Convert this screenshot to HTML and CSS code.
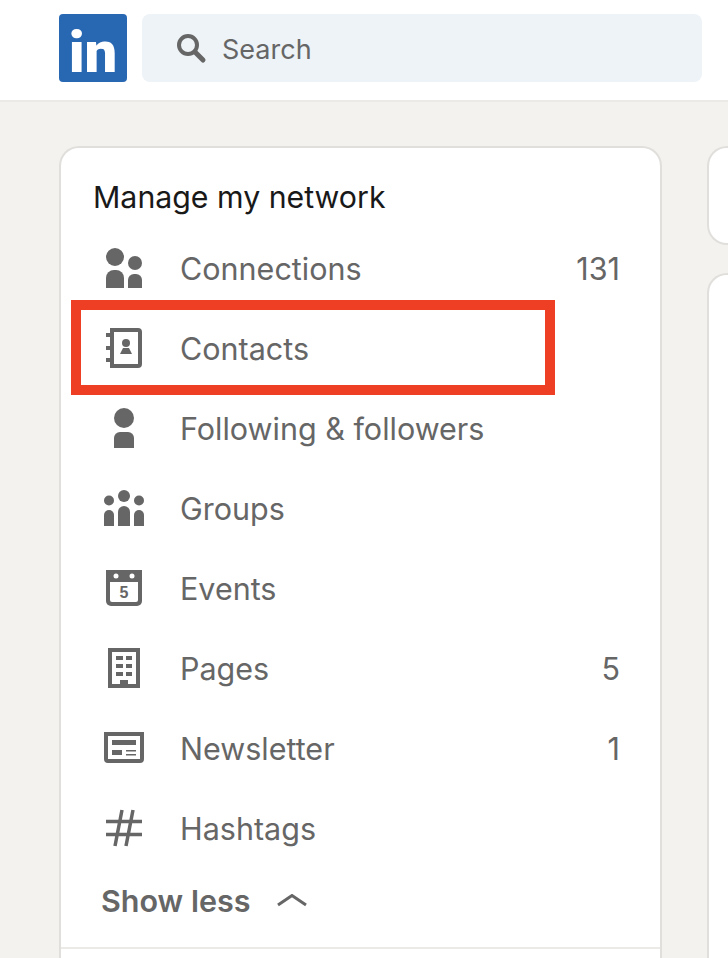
FILE: index.html
```html
<!DOCTYPE html>
<html lang="en">
<head>
  <meta charset="UTF-8">
  <title>LinkedIn - Manage my network</title>
  <link rel="stylesheet" href="styles.css">
</head>
<body>

  <header>
    <div class="logo">in</div>
    <div class="search">
      <svg class="search-icon" viewBox="0 0 32 32" width="32" height="32">
        <circle cx="13" cy="13" r="9" fill="none" stroke="#666" stroke-width="4"/>
        <path d="M20 20l8 8" stroke="#666" stroke-width="5" stroke-linecap="round"/>
      </svg>
      <span class="search-text">Search</span>
    </div>
  </header>

  <main>
    <section class="card network">
      <h1>Manage my network</h1>
      <ul>
        <li>
          <svg viewBox="0 0 48 48" width="48" height="48">
            <circle cx="15" cy="12" r="9"/>
            <path d="M6 43V33a8 8 0 0 1 8-8h2a8 8 0 0 1 8 8v10z"/>
            <circle cx="35" cy="18" r="7"/>
            <path d="M28 43V35a6 6 0 0 1 6-6h2a6 6 0 0 1 6 6v8z"/>
          </svg>
          <span class="name">Connections</span>
          <span class="count">131</span>
        </li>
        <li>
          <svg viewBox="0 0 48 48" width="48" height="48">
            <path d="M12 5h26a2 2 0 0 1 2 2v32a2 2 0 0 1-2 2H12z" fill="none" stroke="#666" stroke-width="4"/>
            <rect x="6" y="8" width="4" height="4"/>
            <rect x="6" y="21" width="4" height="4"/>
            <rect x="6" y="33" width="4" height="4"/>
            <circle cx="26" cy="18" r="4"/>
            <path d="M20 29l3-6h6l3 6z"/>
          </svg>
          <span class="name">Contacts</span>
          <div class="highlight"></div>
        </li>
        <li>
          <svg viewBox="0 0 48 48" width="48" height="48">
            <circle cx="24" cy="13" r="10"/>
            <path d="M14 43V33a6 6 0 0 1 6-6h8a6 6 0 0 1 6 6v10z"/>
          </svg>
          <span class="name">Following &amp; followers</span>
        </li>
        <li>
          <svg viewBox="0 0 48 48" width="48" height="48">
            <circle cx="9" cy="15.500" r="5"/>
            <circle cx="24" cy="11" r="6"/>
            <circle cx="39" cy="15.500" r="5"/>
            <path d="M4 41V30a5 5 0 0 1 10 0v11z"/>
            <path d="M18 41V27a6 6 0 0 1 12 0v14z"/>
            <path d="M34 41V30a5 5 0 0 1 10 0v11z"/>
          </svg>
          <span class="name">Groups</span>
        </li>
        <li>
          <svg viewBox="0 0 48 48" width="48" height="48">
            <path d="M6 5h36v31a5 5 0 0 1-5 5H11a5 5 0 0 1-5-5z"/>
            <circle cx="16" cy="11" r="2.500" fill="#fff"/>
            <circle cx="32" cy="11" r="2.500" fill="#fff"/>
            <path d="M10 17h28v18a2 2 0 0 1-2 2H12a2 2 0 0 1-2-2z" fill="#fff"/>
            <text x="24" y="32.500" text-anchor="middle" class="day">5</text>
          </svg>
          <span class="name">Events</span>
        </li>
        <li>
          <svg viewBox="0 0 48 48" width="48" height="48">
            <rect x="10" y="5" width="28" height="36" fill="none" stroke="#666" stroke-width="4"/>
            <rect x="16" y="11" width="7" height="4"/>
            <rect x="26" y="11" width="6" height="4"/>
            <rect x="16" y="19" width="7" height="4"/>
            <rect x="26" y="19" width="6" height="4"/>
            <rect x="16" y="27" width="7" height="4"/>
            <rect x="26" y="27" width="6" height="4"/>
            <rect x="20" y="35" width="8" height="8"/>
          </svg>
          <span class="name">Pages</span>
          <span class="count">5</span>
        </li>
        <li>
          <svg viewBox="0 0 48 48" width="48" height="48">
            <path d="M6 9h36v25a2 2 0 0 1-2 2H8a2 2 0 0 1-2-2z" fill="none" stroke="#666" stroke-width="4"/>
            <rect x="12" y="15" width="24" height="5"/>
            <rect x="12" y="25" width="10" height="5"/>
            <rect x="26" y="25" width="10" height="1.500"/>
            <rect x="26" y="29" width="10" height="1.500"/>
          </svg>
          <span class="name">Newsletter</span>
          <span class="count">1</span>
        </li>
        <li>
          <svg viewBox="0 0 48 48" width="48" height="48">
            <path d="M6 16.500h36M6 29.500h36M22 5l-7 36M33 5l-7 36" fill="none" stroke="#666" stroke-width="3.500"/>
          </svg>
          <span class="name">Hashtags</span>
        </li>
      </ul>
      <div class="show-less">
        <span>Show less</span>
        <svg viewBox="0 0 32 14" width="32" height="14">
          <path d="M2 11L16 1.500l14 9.500" fill="none" stroke="#666" stroke-width="3"/>
        </svg>
      </div>
      <div class="card-footer"></div>
    </section>

    <div class="side">
      <section class="card side-top"></section>
      <section class="card side-main"></section>
    </div>
  </main>

</body>
</html>
```

FILE: styles.css
```css
* {
  margin: 0;
  padding: 0;
  box-sizing: border-box;
}

html, body {
  height: 958px;
  overflow: hidden;
}

body {
  background-color: #f3f2ef;
  font-family: Inter, 'Noto Sans', sans-serif;
  color: #666;
}

header {
  height: 102px;
  background-color: white;
  border-bottom: 2px solid #ebeae7;
  display: flex;
  align-items: flex-start;
  gap: 15px;
  padding: 14px 26px 0 59px;
}

.logo {
  width: 68px;
  height: 68px;
  flex: none;
  background-color: #2867b2;
  border-radius: 4px;
  padding-top: 10px;
  color: white;
  font-family: Roboto, sans-serif;
  font-size: 58px;
  font-weight: 900;
  line-height: 57px;
  text-align: center;
}

.search {
  flex: 1;
  height: 68px;
  background-color: #eef3f8;
  border-radius: 8px;
  display: flex;
  align-items: center;
  gap: 15px;
  padding-left: 33px;
  font-size: 27px;
}

.search-text {
  padding-top: 2px;
}

main {
  height: 856px;
  display: flex;
  gap: 45px;
  padding: 44px 0 0 59px;
}

.card {
  background-color: white;
  border: 2px solid #e0dfdc;
  border-radius: 20px;
}

.network {
  width: 603px;
  flex: none;
  display: flex;
  flex-direction: column;
  padding-top: 31px;
  border-bottom: none;
  border-radius: 20px 20px 0 0;
}

h1 {
  font-size: 30.300px;
  font-weight: 400;
  line-height: 36px;
  color: #191919;
  padding-left: 32px;
  margin-bottom: 14px;
}

ul {
  list-style: none;
}

li {
  position: relative;
  height: 80px;
  display: flex;
  align-items: center;
  gap: 32px;
  padding: 0 39px 2px;
  font-size: 30.500px;
}

li svg {
  flex: none;
  fill: #666;
  position: relative;
  top: 1px;
}

.name {
  flex: 1;
}

.count {
  padding-right: 1px;
}

.day {
  font-family: 'Liberation Sans', sans-serif;
  font-size: 16px;
  font-weight: 700;
  fill: #666;
}

.highlight {
  position: absolute;
  top: -9px;
  bottom: -6px;
  left: 10px;
  width: 484px;
  border: 10px solid #ee3f24;
}

.show-less {
  display: flex;
  align-items: center;
  gap: 26px;
  padding: 14px 0 28px 40px;
  font-size: 30.500px;
  font-weight: 600;
  line-height: 36px;
}

.card-footer {
  flex: 1;
  border-top: 2px solid #ebeae7;
}

.side {
  flex: 1;
  display: flex;
  flex-direction: column;
  gap: 28px;
}

.side-top {
  height: 99px;
  border-right: none;
  border-radius: 20px 0 0 20px;
}

.side-main {
  flex: 1;
  border-right: none;
  border-bottom: none;
  border-radius: 20px 0 0 0;
}
```
